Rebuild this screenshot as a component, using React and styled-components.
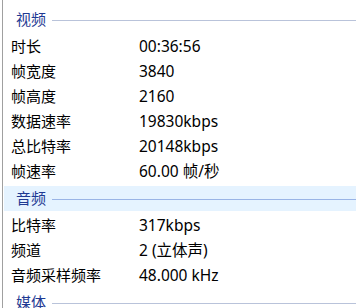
import React from "react";
import styled, { createGlobalStyle } from "styled-components";

const Global = createGlobalStyle`
  html, body { margin: 0; padding: 0; background: #ffffff; }
  body {
    width: 356px;
    height: 308px;
    overflow: hidden;
    font-family: "Noto Sans", "Noto Sans CJK SC", sans-serif;
    font-size: 15px;
    color: #000000;
  }
`;

const Panel = styled.div`
  height: 308px;
  margin-left: 2px;
  border-left: 1px solid #a0a0a0;
  padding-top: 5px;
  padding-left: 1px;
  box-sizing: border-box;
  overflow: hidden;
`;

const Section = styled.section`
  display: flex;
  flex-direction: column;
`;

const Header = styled.div`
  display: flex;
  align-items: center;
  height: 25px;
  margin: 2px 0;
  padding-left: 12px;
  gap: 6px;
  background: ${(p) => (p.$hover ? "#e5f3ff" : "transparent")};
  color: #1f3a93;
  line-height: 25px;
`;

const HeaderLabel = styled.span`
  flex: none;
`;

const HeaderRule = styled.div`
  flex: 1;
  height: 1px;
  margin-top: 1px;
  background: ${(p) => (p.$hover ? "#99b4e6" : "#b9c3da")};
`;

const Row = styled.div`
  display: grid;
  grid-template-columns: 128px 1fr;
  height: 25px;
  align-items: center;
  padding-left: 7px;
  line-height: 25px;
  white-space: nowrap;
`;

const Label = styled.span``;
const Value = styled.span`
  font-size: 15.5px;
`;

const sections = [
  {
    title: "视频",
    rows: [
      ["时长", "00:36:56"],
      ["帧宽度", "3840"],
      ["帧高度", "2160"],
      ["数据速率", "19830kbps"],
      ["总比特率", "20148kbps"],
      ["帧速率", "60.00 帧/秒"],
    ],
  },
  {
    title: "音频",
    hover: true,
    rows: [
      ["比特率", "317kbps"],
      ["频道", "2 (立体声)"],
      ["音频采样频率", "48.000 kHz"],
    ],
  },
  { title: "媒体", rows: [] },
];

export default function App() {
  return (
    <>
      <Global />
      <Panel>
        {sections.map((s) => (
          <Section key={s.title}>
            <Header $hover={s.hover}>
              <HeaderLabel>{s.title}</HeaderLabel>
              <HeaderRule $hover={s.hover} />
            </Header>
            {s.rows.map(([k, v]) => (
              <Row key={k}>
                <Label>{k}</Label>
                <Value>{v}</Value>
              </Row>
            ))}
          </Section>
        ))}
      </Panel>
    </>
  );
}
